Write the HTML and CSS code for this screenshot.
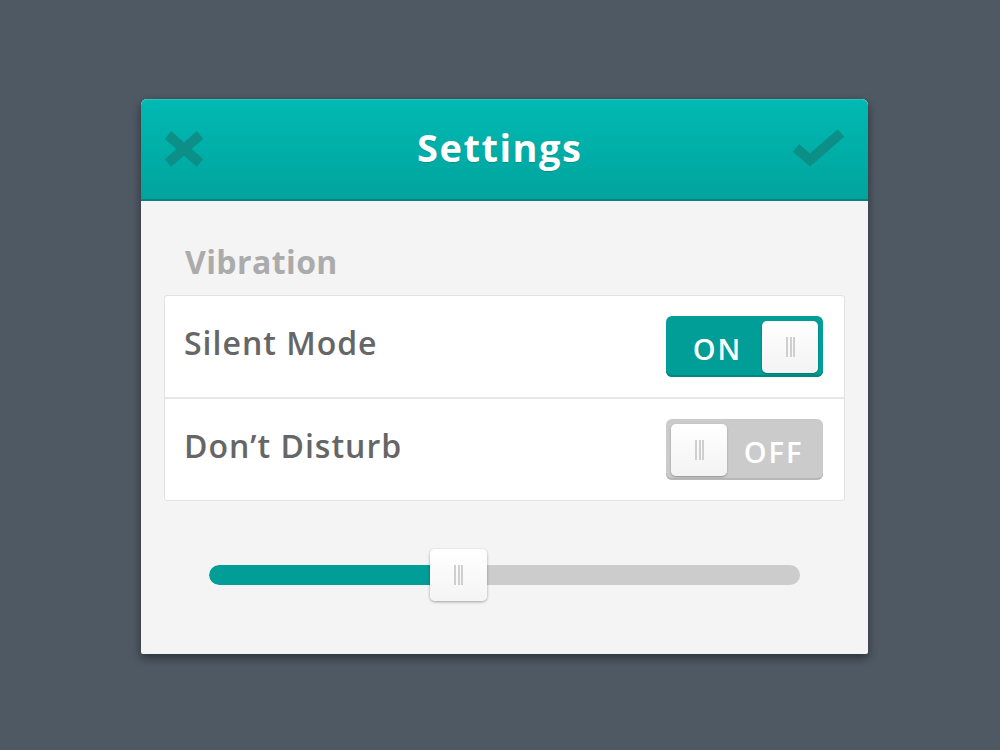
FILE: index.html
```html
<!DOCTYPE html>
<html>
<head>
<meta charset="utf-8">
<link rel="stylesheet" href="styles.css">
</head>
<body>
<div class="dialog">
  <div class="header">
    <svg class="icon-x" width="42" height="40" viewBox="0 0 42 40">
      <path d="M4 6 L36 34 M36 6 L4 34" stroke="#0c8f87" stroke-width="10" fill="none"/>
    </svg>
    <h1 class="title">Settings</h1>
    <svg class="icon-check" width="54" height="42" viewBox="0 0 54 42">
      <path d="M4 21 L18 33 L49 6" stroke="#0c8f87" stroke-width="10" fill="none" stroke-linejoin="miter"/>
    </svg>
  </div>
  <div class="body">
    <div class="section-label">Vibration</div>
    <div class="card">
      <div class="row">
        <span class="row-label">Silent Mode</span>
        <div class="toggle on">
          <span class="toggle-text">ON</span>
          <span class="knob"><span class="grip"></span></span>
        </div>
      </div>
      <div class="row">
        <span class="row-label">Don’t Disturb</span>
        <div class="toggle off">
          <span class="knob"><span class="grip"></span></span>
          <span class="toggle-text">OFF</span>
        </div>
      </div>
    </div>
    <div class="slider">
      <div class="track">
        <div class="fill" style="width: 230px"></div>
      </div>
      <span class="slider-knob"><span class="grip"></span></span>
    </div>
  </div>
</div>
</body>
</html>
```

FILE: styles.css
```css
html, body {
  margin: 0;
  padding: 0;
  background: #4f5964;
  width: 1000px;
  height: 750px;
  overflow: hidden;
  font-family: "Open Sans", "Lato", sans-serif;
}

.dialog {
  margin: 99px 0 0 141px;
  width: 727px;
  height: 555px;
  background: #f4f4f4;
  border-radius: 6px 6px 2px 2px;
  box-shadow: 0 4px 10px rgba(0, 0, 0, 0.45);
  display: flex;
  flex-direction: column;
}

.header {
  height: 100px;
  border-bottom: 2px solid #07847e;
  border-radius: 6px 6px 0 0;
  background: linear-gradient(#00bab3, #00a49d);
  display: flex;
  align-items: center;
  justify-content: space-between;
  padding: 0 22px 0 23px;
  box-shadow: inset 0 1px 0 rgba(255,255,255,0.15);
}

.title {
  margin: 0 0 4px 0;
  padding-left: 1.5px;
  color: #fff;
  font-size: 38px;
  font-weight: 700;
  letter-spacing: 1.5px;
  text-shadow: 0 1px 1px rgba(0,0,0,0.15);
}

.icon-check { margin-top: -2px; }

.body {
  padding: 41px 23px 0 23px;
  display: flex;
  flex-direction: column;
}

.section-label {
  color: #ababab;
  font-size: 32px;
  font-weight: 700;
  padding-left: 21px;
  height: 53px;
  line-height: 40px;
  letter-spacing: 0.4px;
}

.card {
  background: #fff;
  border: 1px solid #e2e2e2;
  border-radius: 3px;
  display: flex;
  flex-direction: column;
}

.row {
  height: 101px;
  display: flex;
  align-items: center;
  justify-content: space-between;
  padding: 0 21px 0 19px;
}

.row + .row {
  border-top: 2px solid #e6e6e6;
}

.row-label {
  color: #666;
  font-size: 32px;
  font-weight: 600;
  margin-top: -8px;
  letter-spacing: 1px;
}

.toggle {
  width: 157px;
  height: 61px;
  border-radius: 6px;
  box-sizing: border-box;
  padding: 5px;
  display: flex;
  align-items: center;
  justify-content: space-between;
}

.toggle.on {
  background: #009e96;
  box-shadow: inset 0 -2px 0 #008880;
}

.toggle.off {
  background: #cbcbcb;
  box-shadow: inset 0 -2px 0 #b8b8b8;
}

.toggle-text {
  color: #fff;
  font-size: 29px;
  font-weight: 600;
  letter-spacing: 2px;
  padding-left: 2px;
  flex: 1;
  text-align: center;
  margin-top: 4px;
}

.knob {
  width: 56px;
  height: 52px;
  border-radius: 5px;
  background: linear-gradient(#ffffff, #f3f3f3);
  box-shadow: 0 1px 2px rgba(0,0,0,0.3);
  display: flex;
  align-items: center;
  justify-content: center;
}

.grip {
  width: 9px;
  height: 20px;
  background: linear-gradient(90deg, #cfcfcf 0 2px, transparent 2px 3.5px, #cfcfcf 3.5px 5.5px, transparent 5.5px 7px, #cfcfcf 7px 9px);
}

.slider {
  position: relative;
  margin: 64px 45px 0 45px;
  height: 20px;
}

.track {
  height: 20px;
  border-radius: 10px;
  background: #cccccc;
  overflow: hidden;
}

.fill {
  height: 100%;
  background: #009e96;
  border-radius: 10px 0 0 10px;
}

.slider-knob {
  position: absolute;
  left: 221px;
  top: -16px;
  width: 57px;
  height: 52px;
  border-radius: 5px;
  background: linear-gradient(#ffffff, #f4f4f4);
  box-shadow: 0 1px 3px rgba(0,0,0,0.35);
  display: flex;
  align-items: center;
  justify-content: center;
}
```
